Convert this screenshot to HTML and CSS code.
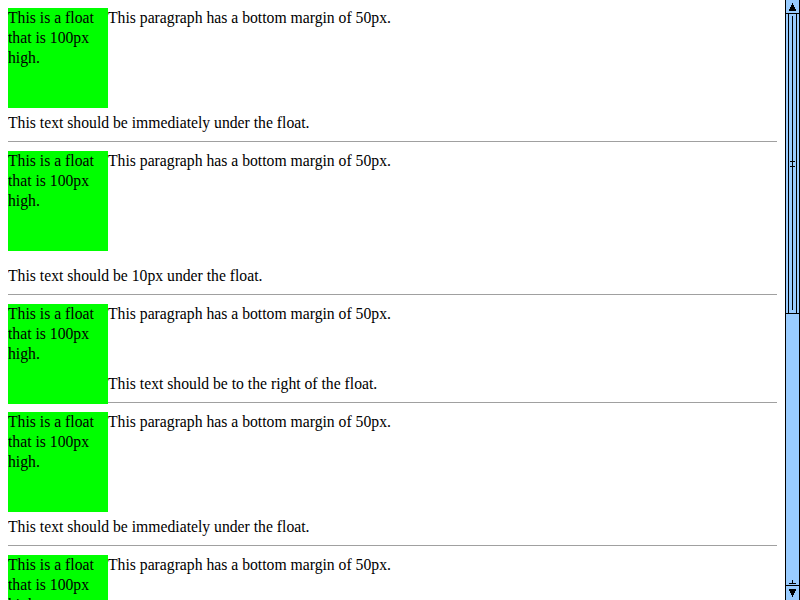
FILE: index.html
```
<!DOCTYPE html>
<html>
<head>
<meta charset="utf-8">
<title>Float clearance</title>
<link rel="stylesheet" href="styles.css">
</head>
<body>
<div class="case">
  <div class="float">This is a float that is 100px high.</div>
  <p class="lead">This paragraph has a bottom margin of 50px.</p>
  <p class="clear near">This text should be immediately under the float.</p>
</div>
<hr class="rule">
<div class="case">
  <div class="float">This is a float that is 100px high.</div>
  <p class="lead">This paragraph has a bottom margin of 50px.</p>
  <p class="clear far">This text should be 10px under the float.</p>
</div>
<hr class="rule">
<div class="case">
  <div class="float">This is a float that is 100px high.</div>
  <p class="lead">This paragraph has a bottom margin of 50px.</p>
  <p class="plain">This text should be to the right of the float.</p>
</div>
<hr class="rule">
<div class="case">
  <div class="float">This is a float that is 100px high.</div>
  <p class="lead">This paragraph has a bottom margin of 50px.</p>
  <p class="clear near">This text should be immediately under the float.</p>
</div>
<hr class="rule">
<div class="case">
  <div class="float">This is a float that is 100px high.</div>
  <p class="lead">This paragraph has a bottom margin of 50px.</p>
  <p class="clear far">This text should be 10px under the float.</p>
</div>

<div class="scrollbar">
  <svg width="15" height="600" viewBox="0 0 15 600" shape-rendering="crispEdges">
    <rect x="0" y="0" width="15" height="600" fill="#99ccff"/>
    <line x1="0.5" y1="0" x2="0.5" y2="600" stroke="#000"/>
    <line x1="14.5" y1="0" x2="14.5" y2="600" stroke="#000"/>
    <polygon points="7.5,3 11.5,11 3.5,11" fill="#000"/>
    <line x1="0" y1="13.5" x2="15" y2="13.5" stroke="#000"/>
    <line x1="3.5" y1="14" x2="3.5" y2="313" stroke="#000"/>
    <line x1="11.5" y1="14" x2="11.5" y2="313" stroke="#000"/>
    <line x1="7.5" y1="16" x2="7.5" y2="310" stroke="#000"/>
    <line x1="5" y1="161.5" x2="10" y2="161.5" stroke="#000"/>
    <line x1="5" y1="166.5" x2="10" y2="166.5" stroke="#000"/>
    <line x1="0" y1="313.5" x2="15" y2="313.5" stroke="#000"/>
    <rect x="7" y="580" width="1" height="3" fill="#000"/>
    <rect x="4" y="583" width="7" height="1" fill="#000"/>
    <line x1="0" y1="585.5" x2="15" y2="585.5" stroke="#000"/>
    <polygon points="3.5,589 11.5,589 7.5,597" fill="#000"/>
  </svg>
</div>
</body>
</html>
```
FILE: styles.css
```
html {
  scrollbar-width: none;
  background: #fff;
}
html::-webkit-scrollbar {
  display: none;
}
body {
  margin: 8px 23px 8px 8px;
  font-family: "Liberation Serif", "Times New Roman", serif;
  font-size: 15.7px;
  line-height: 20px;
  color: #000;
}
.float {
  float: left;
  width: 100px;
  height: 100px;
  background: #00ff00;
}
p {
  margin: 0;
}
.lead {
  margin-bottom: 50px;
}
.clear {
  clear: left;
}
.near {
  padding-top: 5px;
}
.far {
  padding-top: 15px;
}
.rule {
  height: 0;
  margin: 8px 0;
  border: 0;
  border-top: 1px solid #a0a0a0;
  border-bottom: 1px solid #fff;
}
.scrollbar {
  position: fixed;
  top: 0;
  right: 0;
  width: 15px;
  height: 600px;
  line-height: 0;
}
.scrollbar svg {
  display: block;
}
```
